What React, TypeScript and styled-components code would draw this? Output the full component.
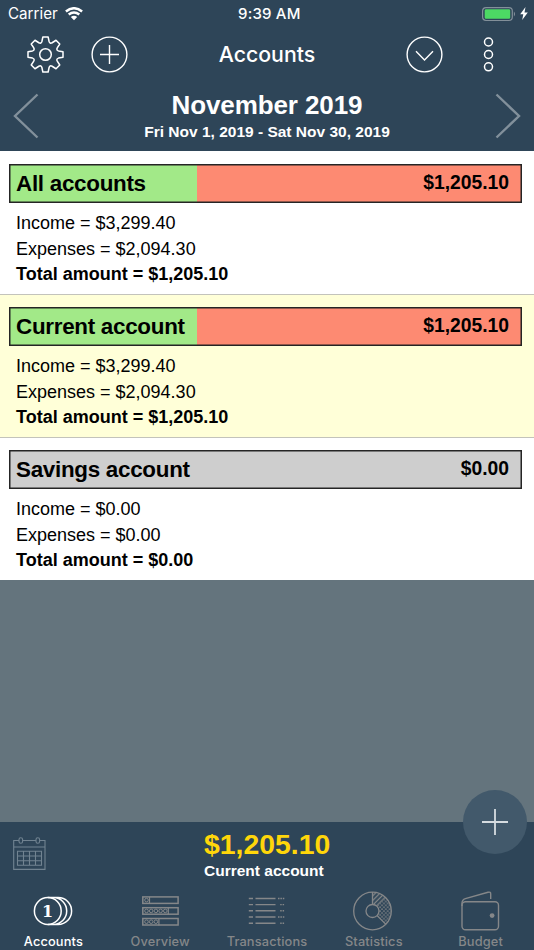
import React from "react";
import styled, { createGlobalStyle } from "styled-components";

const Global = createGlobalStyle`
  * { box-sizing: border-box; }
  body { margin: 0; background: #64747d; }
`;

const helv = `"Liberation Sans", Arial, sans-serif`;
const sys = `Inter, "Liberation Sans", sans-serif`;

const Screen = styled.div`
  width: 534px; height: 950px; display: flex; flex-direction: column;
  background: #64747d; font-family: ${helv}; color: #000; overflow: hidden;
`;
const Header = styled.header`
  height: 151px; flex: none; background: #2e4558; color: #fff;
`;
const StatusBar = styled.div`
  height: 28px; display: grid; grid-template-columns: 1fr auto 1fr; align-items: center;
  padding: 0 6px 0 8px; font: 400 15.2px/28px ${sys};
`;
const StatusGroup = styled.div<{ $end?: boolean }>`
  display: flex; align-items: center; gap: ${(p) => (p.$end ? 4 : 7)}px;
  justify-content: ${(p) => (p.$end ? "flex-end" : "flex-start")};
`;
const Carrier = styled.span`width: 50px; white-space: nowrap;`;
const Clock = styled.span`
  font-weight: 500; font-size: 15px; letter-spacing: 0.2px; width: 64px; padding-left: 2px;
  white-space: nowrap; text-align: center;
`;
const NavBar = styled.nav`
  height: 53px; display: grid; grid-template-columns: 1fr auto 1fr; align-items: center; padding: 0 27px;
`;
const NavGroup = styled.div<{ $end?: boolean }>`
  display: flex; justify-content: ${(p) => (p.$end ? "flex-end" : "flex-start")};
  gap: 27.3px;
`;
const IconButton = styled.button`
  border: 0; padding: 0; background: none; color: inherit; display: flex; flex: none;
`;
const NavTitle = styled.h1`margin: 0; padding-bottom: 1px; font: 500 21.3px/28px ${sys};`;
const Period = styled.div`
  height: 70px; display: flex; justify-content: space-between; align-items: center; padding: 0 13px;
`;
const PeriodText = styled.div`text-align: center; font-weight: 700; white-space: nowrap;`;
const Month = styled.div`font-size: 26px; line-height: 30px; letter-spacing: -0.1px;`;
const Range = styled.div`font-size: 15.5px; line-height: 23px;`;

const List = styled.main`flex: 1; min-height: 0;`;
const Account = styled.section<{ $selected?: boolean; $last?: boolean }>`
  height: ${(p) => (p.$last ? 142 : 143)}px; padding: 12px 12px 0 9px;
  background: ${(p) => (p.$selected ? "#ffffd8" : "#fff")};
  border-bottom: ${(p) => (p.$last ? 0 : 1)}px solid #c3c3bb;
  &:first-child { height: 144px; padding-top: 13px; }
`;
const Bar = styled.div<{ $empty?: boolean }>`
  height: 39px; border: 1px solid #252525; box-shadow: inset 0 0 0 0.5px #252525;
  display: flex; align-items: center; justify-content: space-between;
  padding: 0 12px 0 6px; font-weight: 700;
  background: ${(p) => (p.$empty ? "#cecece" : "linear-gradient(90deg, #a2e988 187px, #fd8a72 187px)")};
`;
const AccountName = styled.span`font-size: 22.4px; letter-spacing: -0.28px; line-height: 36px; padding-top: 1px;`;
const Balance = styled.span`font-size: 19.3px; line-height: 36px; padding-bottom: 2px;`;
const Details = styled.div`padding: 8px 0 0 7px;`;
const Detail = styled.div<{ $bold?: boolean }>`
  font-size: 18px; line-height: 25.7px; font-weight: ${(p) => (p.$bold ? 700 : 400)};
`;

const Footer = styled.footer`
  position: relative; height: 128px; flex: none; background: #2e4558; color: #fff;
`;
const Summary = styled.div`
  height: 67px; display: grid; grid-template-columns: 191px 1fr; padding-left: 13px;
`;
const CalendarButton = styled(IconButton)`padding-top: 15px; align-self: start; color: #718391;`;
const Total = styled.div`color: #ffd60a; font: 700 28.4px/32px ${helv}; padding-top: 6px;`;
const TotalLabel = styled.div`font: 700 15.5px/18px ${helv}; padding-top: 2px;`;
const Fab = styled.button`
  position: absolute; right: 7px; top: -32px; width: 64px; height: 64px; padding: 0; border: 0;
  border-radius: 50%; background: #42596b; color: #d6dce0; display: grid; place-items: center;
`;
const Tabs = styled.nav`height: 61px; display: grid; grid-template-columns: repeat(5, 1fr);`;
const Tab = styled.button<{ $active?: boolean }>`
  border: 0; padding: 0; background: none; display: flex; flex-direction: column; align-items: center;
  color: ${(p) => (p.$active ? "#fff" : "#858789")};
`;
const TabIcon = styled.span`height: 44px; display: flex; align-items: center;`;
const TabLabel = styled.span`font: 500 12.8px/17px ${sys}; letter-spacing: 0.15px; white-space: nowrap;`;

const gearPath = (() => {
  const at = (a: number, r: number) => `${(18.5 + r * Math.cos(a)).toFixed(2)} ${(18.5 + r * Math.sin(a)).toFixed(2)}`;
  let d = "";
  for (let i = 0; i < 8; i++) {
    const b = (i * Math.PI) / 4 - Math.PI / 2;
    d += `${i ? "L" : "M"}${at(b - 0.27, 13.5)}L${at(b - 0.15, 17.7)}L${at(b + 0.15, 17.7)}L${at(b + 0.27, 13.5)}`;
    d += `Q${at(b + Math.PI / 8, 11.4)} ${at(b + Math.PI / 4 - 0.27, 13.5)}`;
  }
  return `${d}Z`;
})();

const Gear = () => (
  <svg width="37" height="37" fill="none" stroke="currentColor" strokeWidth="1.5" strokeLinejoin="round">
    <path d={gearPath} /><circle cx="18.5" cy="18.5" r="5.8" />
  </svg>
);
const CirclePlus = () => (
  <svg width="37" height="37" fill="none" stroke="currentColor" strokeWidth="1.4">
    <circle cx="18.5" cy="18.5" r="17.4" /><path d="M9 18.5H28M18.5 9V28" />
  </svg>
);
const CircleDown = () => (
  <svg width="37" height="37" fill="none" stroke="currentColor" strokeWidth="1.4">
    <circle cx="18.5" cy="18.5" r="17.4" /><path d="M10 15.3L18.5 24L27 15.3" />
  </svg>
);
const More = () => (
  <svg width="37" height="37" fill="none" stroke="currentColor" strokeWidth="1.5">
    {[6, 18.5, 30.8].map((y) => <circle key={y} cx="18.5" cy={y} r="4" />)}
  </svg>
);
const Chevron = ({ right }: { right?: boolean }) => (
  <svg width="26" height="46" fill="none" stroke="#82909b" strokeWidth="2.4">
    <path d={right ? "M1.5 1.5L24 23L1.5 44.5" : "M24.5 1.5L2 23L24.5 44.5"} />
  </svg>
);
const Wifi = () => (
  <svg width="18" height="14" viewBox="0 0 18 14" fill="none" stroke="currentColor" strokeWidth="2.5">
    <path d="M.9 4.5Q9-2 17.1 4.5M3.7 7.6Q9 3.4 14.3 7.6" /><path d="M9 13.3L5.8 10.1Q9 7.5 12.2 10.1Z" fill="currentColor" stroke="none" />
  </svg>
);
const Battery = () => (
  <svg width="34" height="15" fill="none">
    <rect x=".6" y=".6" width="29.7" height="12.9" rx="3.4" stroke="#83909a" strokeWidth="1.2" />
    <rect x="2.7" y="2.2" width="25.5" height="9.6" rx="1.3" fill="#4cd964" /><path d="M31.9 4.6Q34.2 7 31.9 9.4Z" fill="#83909a" />
  </svg>
);
const Bolt = () => <svg width="8" height="14"><path d="M5.5 0L.2 7.2H3.3L2.2 13L7.8 5.4H4.5Z" fill="currentColor" /></svg>;
const Calendar = () => (
  <svg width="33" height="34" fill="none" stroke="currentColor" strokeWidth="1.1">
    <path d="M6 3.5H.7V32.4H32V3.5H26.8M9.5 3.5H23M.7 10H32" />
    <rect x="6" y=".7" width="3.6" height="5.5" rx="1.8" /><rect x="23" y=".7" width="3.6" height="5.5" rx="1.8" />
    <path d="M4.5 14.3H28.5V28.3H4.5ZM4.5 19H28.5M4.5 23.7H28.5M10.5 14.3V28.3M16.5 14.3V28.3M22.5 14.3V28.3" />
  </svg>
);
const Coins = () => (
  <svg width="40" height="30" fill="none" stroke="currentColor" strokeWidth="1.5">
    <circle cx="14.8" cy="15" r="13.4" />
    <path d="M14.8 1.6H25.2A13.4 13.4 0 0 1 25.2 28.4H14.8M20.3 1.6A13.4 13.4 0 0 1 20.3 28.4" />
    <text x="14.5" y="20.6" textAnchor="middle" fill="currentColor" stroke="none" fontFamily="DejaVu Serif" fontWeight="700" fontSize="16">1</text>
  </svg>
);
const Overview = () => (
  <svg width="37" height="30" fill="none" stroke="currentColor">
    {[[0, 1], [10.8, 5], [21.6, 3]].map(([y, n]) => (
      <g key={y}>
        <rect x=".8" y={y + 0.9} width="35.3" height="6.5" strokeWidth="1.5" />
        <path d={`M${n * 4.7 + 2.8} ${y + 0.8}v7`} strokeWidth="1.2" />
        {Array.from({ length: n }, (_, i) => <circle key={i} cx={4.5 + i * 4.7} cy={y + 4.1} r="1.8" />)}
      </g>
    ))}
  </svg>
);
const Transactions = () => (
  <svg width="37" height="28" stroke="currentColor" strokeWidth="1.4">
    {[1.5, 7.6, 13.8, 20, 26.2].map((y, i) => (
      <g key={y}><path d={`M.8 ${y}H5M7.5 ${y}H27.5`} /><path d={`M${i % 3 ? 32.2 : 30} ${y}H36.4`} strokeDasharray="1.5 .9" /></g>
    ))}
  </svg>
);
const Statistics = () => (
  <svg width="42" height="40" viewBox="0 0 42 40" fill="none" stroke="currentColor" strokeWidth="1.3">
    <defs>
      <pattern id="lines" width="3.3" height="3.3" patternUnits="userSpaceOnUse" patternTransform="rotate(45)"><path d="M1.2 0V3.3" strokeWidth="1.3" /></pattern>
      <pattern id="dots" width="3.8" height="3.8" patternUnits="userSpaceOnUse"><g fill="currentColor" stroke="none"><circle cx="1" cy="1" r=".85" /><circle cx="2.9" cy="2.9" r=".85" /></g></pattern>
    </defs>
    <g transform="translate(-.5 0)">
      <path d="M20 1A19 19 0 0 1 33.4 6.6L24.6 15.4A6.5 6.5 0 0 0 20 13.5Z" fill="url(#lines)" stroke="none" />
      <path d="M33.4 6.6A19 19 0 0 1 33.4 33.4L24.6 24.6A6.5 6.5 0 0 0 24.6 15.4Z" fill="url(#dots)" stroke="none" />
      <circle cx="20" cy="20" r="18.8" /><circle cx="20" cy="20" r="6.5" /><path d="M20 1V13.5M24.6 24.6L33.4 33.4" />
    </g>
  </svg>
);
const Wallet = () => (
  <svg width="40" height="40" fill="none" stroke="currentColor" strokeWidth="1.4">
    <rect x="1" y="10.7" width="36.5" height="28" rx="3.5" />
    <path d="M1 15V12.2C1 9.5 2 8.5 4.4 7.7L27 1.3C29.2.8 29.7 1.4 29.7 3V8" /><circle cx="31.1" cy="24.6" r="2.4" fill="currentColor" stroke="none" />
  </svg>
);

const accounts = [
  { name: "All accounts", income: "$3,299.40", expenses: "$2,094.30", total: "$1,205.10" },
  { name: "Current account", income: "$3,299.40", expenses: "$2,094.30", total: "$1,205.10", selected: true },
  { name: "Savings account", income: "$0.00", expenses: "$0.00", total: "$0.00", empty: true },
];
const tabs = [
  { label: "Accounts", Icon: Coins }, { label: "Overview", Icon: Overview }, { label: "Transactions", Icon: Transactions },
  { label: "Statistics", Icon: Statistics }, { label: "Budget", Icon: Wallet },
];

export default function App() {
  return (
    <Screen>
      <Global />
      <Header>
        <StatusBar>
          <StatusGroup><Carrier>Carrier</Carrier><Wifi /></StatusGroup>
          <Clock>9:39 AM</Clock>
          <StatusGroup $end><Battery /><Bolt /></StatusGroup>
        </StatusBar>
        <NavBar>
          <NavGroup><IconButton><Gear /></IconButton><IconButton><CirclePlus /></IconButton></NavGroup>
          <NavTitle>Accounts</NavTitle>
          <NavGroup $end><IconButton><CircleDown /></IconButton><IconButton><More /></IconButton></NavGroup>
        </NavBar>
        <Period>
          <IconButton><Chevron /></IconButton>
          <PeriodText><Month>November 2019</Month><Range>Fri Nov 1, 2019 - Sat Nov 30, 2019</Range></PeriodText>
          <IconButton><Chevron right /></IconButton>
        </Period>
      </Header>
      <List>
        {accounts.map((a) => (
          <Account key={a.name} $selected={a.selected} $last={a.empty}>
            <Bar $empty={a.empty}><AccountName>{a.name}</AccountName><Balance>{a.total}</Balance></Bar>
            <Details>
              <Detail>Income = {a.income}</Detail>
              <Detail>Expenses = {a.expenses}</Detail>
              <Detail $bold>Total amount = {a.total}</Detail>
            </Details>
          </Account>
        ))}
      </List>
      <Footer>
        <Summary>
          <CalendarButton><Calendar /></CalendarButton>
          <div><Total>$1,205.10</Total><TotalLabel>Current account</TotalLabel></div>
        </Summary>
        <Tabs>
          {tabs.map(({ label, Icon }, i) => (
            <Tab key={label} $active={i === 0}><TabIcon><Icon /></TabIcon><TabLabel>{label}</TabLabel></Tab>
          ))}
        </Tabs>
        <Fab><svg width="26" height="26" stroke="currentColor" strokeWidth="1.8"><path d="M0 13H26M13 0V26" /></svg></Fab>
      </Footer>
    </Screen>
  );
}
